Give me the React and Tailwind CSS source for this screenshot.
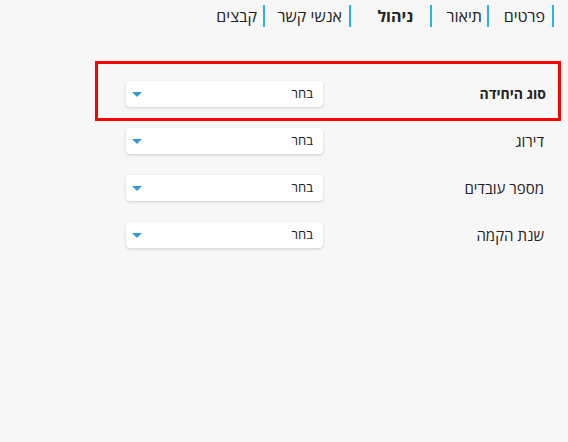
const tabs = [
  { label: 'פרטים', cls: 'w-[65px] ps-[7px]' },
  { label: 'תיאור', cls: 'w-[57px] ps-[5px]' },
  { label: 'ניהול', cls: 'w-[81px] ps-[17px] font-bold', active: true },
  { label: 'אנשי קשר', cls: 'w-[86px] ps-[7px]' },
  { label: 'קבצים', cls: 'ps-[6px]' },
];

const rows = [
  { label: 'סוג היחידה', highlight: true },
  { label: 'דירוג' },
  { label: 'מספר עובדים' },
  { label: 'שנת הקמה' },
];

const Select = () => (
  <div className="w-[197px] h-[26px] bg-white rounded-[4px] shadow-[0_1px_3px_rgba(0,0,0,0.18)] flex items-center justify-between ps-[10px] pe-[6px]">
    <span className="text-[13px] text-[#222]">בחר</span>
    <span className="w-0 h-0 border-l-[5px] border-r-[5px] border-t-[5px] border-l-transparent border-r-transparent border-t-[#2f9fd3]" />
  </div>
);

export default function App() {
  return (
    <div
      dir="rtl"
      className="w-[568px] h-[442px] bg-[#f7f7f7] text-[#222]"
      style={{ fontFamily: '"Open Sans", "DejaVu Sans", sans-serif' }}
    >
      {/* Tabs */}
      <div className="flex pt-[5px] ps-[14px]">
        {tabs.map((t) => (
          <div
            key={t.label}
            className={`h-[22px] border-s-2 border-[#2bb3e0] flex items-center text-[16px] leading-none ${t.cls}`}
          >
            {t.label}
          </div>
        ))}
      </div>

      {/* Form */}
      <div className="mt-[34px] ms-[7px] w-[466px] flex flex-col">
        {rows.map((r) => (
          <div
            key={r.label}
            className={`flex justify-between items-start border-[3px] pe-[28px] ${
              r.highlight ? 'border-[#ff0000] h-[60px] pt-[17px] ps-[12px]' : 'border-transparent h-[47px] pt-[4px] ps-[14px]'
            }`}
          >
            <span className={`leading-[26px] ${r.highlight ? 'font-bold text-[14px]' : 'text-[15px]'}`}>{r.label}</span>
            <Select />
          </div>
        ))}
      </div>
    </div>
  );
}
